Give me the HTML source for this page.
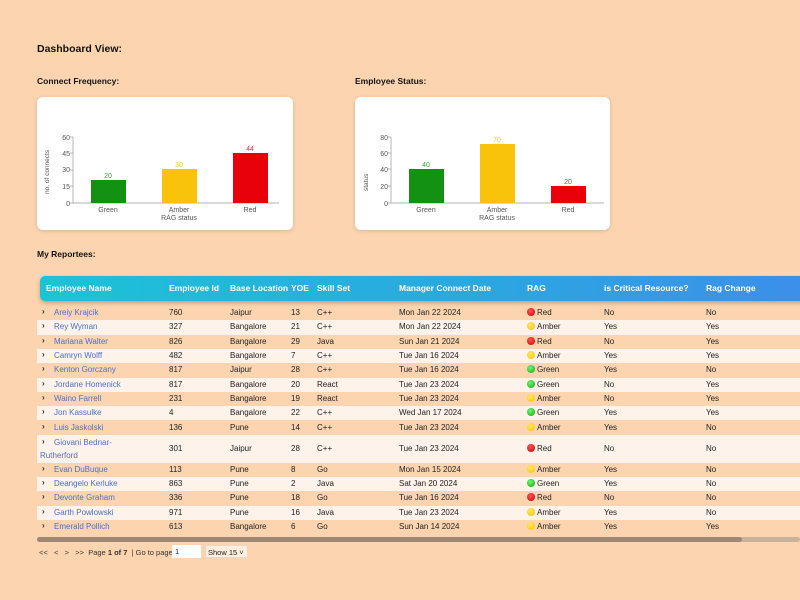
<!DOCTYPE html>
<html><head><meta charset="utf-8"><style>
*{margin:0;padding:0;box-sizing:border-box}
body{width:800px;height:600px;background:#fcd5b0;font-family:"Liberation Sans",sans-serif;position:relative;overflow:hidden;color:#222}
.t{position:absolute;font-size:9.5px;font-weight:bold;color:#111}
.card{position:absolute;background:#fff;border-radius:6px;box-shadow:0 1px 4px rgba(0,0,0,.15)}
.hdr{position:absolute;left:40px;top:276px;width:780px;height:25px;border-radius:5px 0 0 5px;background:linear-gradient(90deg,#1cc3d6,#2aa8e0 55%,#3d8ee9);box-shadow:0 2px 4px rgba(0,0,0,.25)}
.c{position:absolute;font-size:8px;white-space:nowrap;line-height:10px}
.h{color:#fff;font-weight:bold;font-size:8.5px;top:283px}
.row{position:absolute;left:37px;width:763px}
.lnk{color:#4a6fc8}
.dot{display:inline-block;width:8px;height:8px;border-radius:50%;vertical-align:-1px;margin-right:2px}
.r{background:radial-gradient(circle at 40% 35%,#f55,#c00)}
.a{background:radial-gradient(circle at 40% 35%,#ffe866,#f2c400)}
.g{background:radial-gradient(circle at 40% 35%,#6f6,#1a9d1a)}
</style></head><body>
<div class="t" style="left:37px;top:43px;font-size:10.5px">Dashboard View:</div>
<div class="t" style="left:37px;top:76px;font-size:8.5px">Connect Frequency:</div>
<div class="t" style="left:355px;top:76px;font-size:8.5px">Employee Status:</div>
<div class="card" style="left:37px;top:97px;width:256px;height:133px"></div>
<div class="card" style="left:355px;top:97px;width:255px;height:133px"></div>
<svg style="position:absolute;left:0;top:0" width="800" height="240" font-family="Liberation Sans,sans-serif" font-size="7" fill="#555">
<g stroke="#999" stroke-width="0.7">
<line x1="73" y1="137" x2="73" y2="203"/><line x1="73" y1="203" x2="279" y2="203"/>
<line x1="70" y1="137" x2="73" y2="137"/><line x1="70" y1="153" x2="73" y2="153"/><line x1="70" y1="170" x2="73" y2="170"/><line x1="70" y1="186" x2="73" y2="186"/><line x1="70" y1="203" x2="73" y2="203"/>
<line x1="391" y1="137" x2="391" y2="203"/><line x1="391" y1="203" x2="604" y2="203"/>
<line x1="388" y1="137" x2="391" y2="137"/><line x1="388" y1="153" x2="391" y2="153"/><line x1="388" y1="169" x2="391" y2="169"/><line x1="388" y1="186" x2="391" y2="186"/><line x1="388" y1="203" x2="391" y2="203"/>
</g>
<g text-anchor="end"><text x="70" y="140">60</text><text x="70" y="156">45</text><text x="70" y="172">30</text><text x="70" y="189">15</text><text x="70" y="206">0</text>
<text x="388" y="140">80</text><text x="388" y="156">60</text><text x="388" y="172">40</text><text x="388" y="189">20</text><text x="388" y="206">0</text></g>
<text transform="translate(49,194) rotate(-90)" font-size="6.5">no. of connects</text>
<text transform="translate(368,191) rotate(-90)" font-size="6.5">status</text>
<rect x="91" y="180" width="35" height="23" fill="#129112"/><rect x="162" y="169" width="35" height="34" fill="#f9c30b"/><rect x="233" y="153" width="35" height="50" fill="#e8000b"/>
<rect x="409" y="169" width="35" height="34" fill="#129112"/><rect x="480" y="144" width="35" height="59" fill="#f9c30b"/><rect x="551" y="186" width="35" height="17" fill="#e8000b"/>
<g text-anchor="middle">
<text x="108" y="178" fill="#3a9a3a">20</text><text x="179" y="167" fill="#f6c040">30</text><text x="250" y="151" fill="#e03040">44</text>
<text x="426" y="167" fill="#3a9a3a">40</text><text x="497" y="142" fill="#f6c040">70</text><text x="568" y="184" fill="#e03040">20</text>
<text x="108" y="212">Green</text><text x="179" y="212">Amber</text><text x="250" y="212">Red</text><text x="179" y="220">RAG status</text>
<text x="426" y="212">Green</text><text x="497" y="212">Amber</text><text x="568" y="212">Red</text><text x="497" y="220">RAG status</text>
</g></svg>
<div class="t" style="left:37px;top:249px;font-size:8.5px">My Reportees:</div>
<div class="hdr"></div>
<div class="c h" style="left:46px">Employee Name</div>
<div class="c h" style="left:169px">Employee Id</div>
<div class="c h" style="left:230px">Base Location</div>
<div class="c h" style="left:291px">YOE</div>
<div class="c h" style="left:317px">Skill Set</div>
<div class="c h" style="left:399px">Manager Connect Date</div>
<div class="c h" style="left:527px">RAG</div>
<div class="c h" style="left:604px">is Critical Resource?</div>
<div class="c h" style="left:706px">Rag Change</div>
<div id="rows"></div>
<div style="position:absolute;left:37px;top:537px;width:763px;height:5px;background:#c9b29c;border-radius:3px"></div>
<div style="position:absolute;left:37px;top:537px;width:705px;height:5px;background:#9e8874;border-radius:3px"></div>
<div class="c" style="left:39px;top:548px;font-size:7.5px;color:#333">&lt;&lt;&nbsp;&nbsp;&nbsp;&lt;&nbsp;&nbsp;&nbsp;&gt;&nbsp;&nbsp;&nbsp;&gt;&gt;&nbsp;&nbsp;Page <b>1 of 7</b> &nbsp;| Go to page:</div>
<div style="position:absolute;left:172px;top:545px;width:29px;height:13px;background:#fff;font-size:7.5px;padding:2px 3px">1</div>
<div style="position:absolute;left:205px;top:545px;width:43px;height:13px;background:#fdeedd;font-size:7.5px;padding:2px 2px;white-space:nowrap;border:1px solid #e8d8c8">Show 15 ˅</div>
<script>
var d=[["Areiy Krajcik",760,"Jaipur",13,"C++","Mon Jan 22 2024","r","No","No"],
["Rey Wyman",327,"Bangalore",21,"C++","Mon Jan 22 2024","a","Yes","Yes"],
["Mariana Walter",826,"Bangalore",29,"Java","Sun Jan 21 2024","r","No","Yes"],
["Camryn Wolff",482,"Bangalore",7,"C++","Tue Jan 16 2024","a","Yes","Yes"],
["Kenton Gorczany",817,"Jaipur",28,"C++","Tue Jan 16 2024","g","Yes","No"],
["Jordane Homenick",817,"Bangalore",20,"React","Tue Jan 23 2024","g","No","Yes"],
["Waino Farrell",231,"Bangalore",19,"React","Tue Jan 23 2024","a","No","Yes"],
["Jon Kassulke",4,"Bangalore",22,"C++","Wed Jan 17 2024","g","Yes","Yes"],
["Luis Jaskolski",136,"Pune",14,"C++","Tue Jan 23 2024","a","Yes","No"],
["",301,"Jaipur",28,"C++","Tue Jan 23 2024","r","No","No"],
["Evan DuBuque",113,"Pune",8,"Go","Mon Jan 15 2024","a","Yes","No"],
["Deangelo Kerluke",863,"Pune",2,"Java","Sat Jan 20 2024","g","Yes","No"],
["Devonte Graham",336,"Pune",18,"Go","Tue Jan 16 2024","r","No","No"],
["Garth Powlowski",971,"Pune",16,"Java","Tue Jan 23 2024","a","Yes","No"],
["Emerald Pollich",613,"Bangalore",6,"Go","Sun Jan 14 2024","a","Yes","Yes"]];
var nm={r:"Red",a:"Amber",g:"Green"},h="",y=306;
d.forEach(function(r,i){var ht=i==9?28:14.3;var cy=y+ht/2-5;
h+='<div class="row" style="top:'+y+'px;height:'+ht+'px;background:'+(i%2?'#fdf3ea':'transparent')+'"></div>';
if(i==9){
h+='<div class="c" style="left:42px;top:'+(y+2)+'px;font-weight:bold">›</div>';
h+='<div class="c lnk" style="left:54px;top:'+(y+3)+'px">Giovani Bednar-</div><div class="c lnk" style="left:40px;top:'+(y+16)+'px">Rutherford</div>';
}else{
h+='<div class="c" style="left:42px;top:'+(cy-1)+'px;font-weight:bold">›</div>';
h+='<div class="c lnk" style="left:54px;top:'+cy+'px">'+r[0]+'</div>';}
var xs=[169,230,291,317,399];[r[1],r[2],r[3],r[4],r[5]].forEach(function(v,k){h+='<div class="c" style="left:'+xs[k]+'px;top:'+cy+'px">'+v+'</div>'});
h+='<div class="c" style="left:527px;top:'+cy+'px"><span class="dot '+r[6]+'"></span>'+nm[r[6]]+'</div>';
h+='<div class="c" style="left:604px;top:'+cy+'px">'+r[7]+'</div><div class="c" style="left:706px;top:'+cy+'px">'+r[8]+'</div>';
y+=ht;});
document.getElementById('rows').innerHTML=h;
</script>
</body></html>
